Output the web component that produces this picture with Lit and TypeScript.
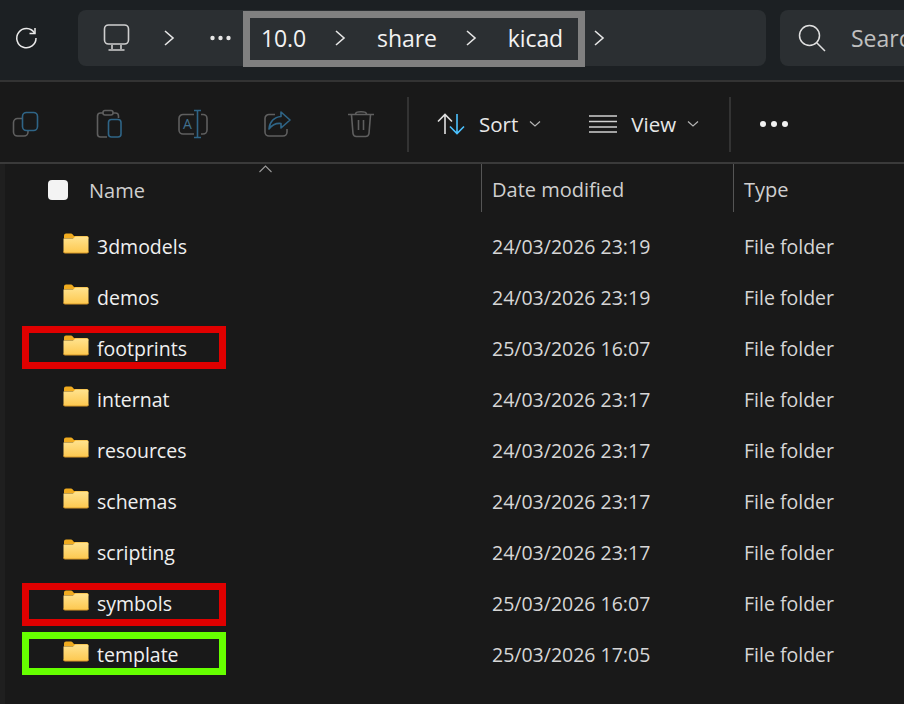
import { LitElement, html, css, svg } from "lit";
import { customElement } from "lit/decorators.js";

const GRAY = "#5f5f5f";
const BLUE = "#2f6587";

const chevron = html`<svg class="chev" width="12" height="18" viewBox="0 0 12 18"><path d="M2 2 L10 9 L2 16" fill="none" stroke="#e6e6e6" stroke-width="1.6"/></svg>`;
const smallChev = html`<svg class="schev" width="12" height="8" viewBox="0 0 12 8"><path d="M1 1.5 L6 6 L11 1.5" fill="none" stroke="#b5b5b5" stroke-width="1.2"/></svg>`;

const folder = html`<svg class="folder" width="26" height="21" viewBox="0 0 26 21">
  <defs><linearGradient id="fg" x1="0" y1="0" x2="0" y2="1"><stop offset="0" stop-color="#ffe38f"/><stop offset="1" stop-color="#fdc84f"/></linearGradient></defs>
  <path d="M1 2.5 a2 2 0 0 1 2-2 H8 a2 2 0 0 1 1.5 .7 L11 3 H24 a1.5 1.5 0 0 1 1.5 1.5 V5.5 H1 Z" fill="#f0ab1f"/>
  <path d="M.5 5.5 L10 5.5 L12.5 3.5 H24 a1.5 1.5 0 0 1 1.5 1.5 V18.5 a1.5 1.5 0 0 1 -1.5 1.5 H2 a1.5 1.5 0 0 1 -1.5 -1.5 Z" fill="url(#fg)"/>
  <path d="M.5 18.5 a1.5 1.5 0 0 0 1.5 1.5 H24 a1.5 1.5 0 0 0 1.5 -1.5" fill="none" stroke="#d99a2b" stroke-width="1"/>
</svg>`;

const tool = (body: unknown) => html`<svg class="tool" width="32" height="32" viewBox="0 0 32 32" fill="none" stroke-width="1.6">${body}</svg>`;

const toolIcons = [
  tool(svg`<path d="M13 10.5 H9 a4 4 0 0 0 -4.5 4 V24 a4 4 0 0 0 4 4 H15 a4 4 0 0 0 4 -4 V23" stroke=${GRAY}/><rect x="13.5" y="4.5" width="15" height="18" rx="4" stroke=${BLUE}/>`),
  tool(svg`<path d="M10 5 H7.5 a3 3 0 0 0 -3 3 V26 a3 3 0 0 0 3 3 H14 M20 5 h2.5 a3 3 0 0 1 3 3 V10" stroke=${GRAY}/><rect x="10" y="2.5" width="10" height="4.5" rx="2" stroke=${GRAY}/><rect x="15.5" y="11.5" width="12.5" height="17.5" rx="3" stroke=${BLUE}/>`),
  tool(svg`<path d="M17 6.5 H6 a4 4 0 0 0 -4 4 V22 a4 4 0 0 0 4 4 H17 M24 6.5 h2 a4 4 0 0 1 4 4 V22 a4 4 0 0 1 -4 4 h-2" stroke=${GRAY}/><path d="M20.5 2.5 V29.5 M17 2.5 H24 M17 29.5 H24" stroke=${BLUE}/><text x="6" y="21" font-size="14" font-family="Open Sans, sans-serif" fill="#41708d" stroke="none">A</text>`),
  tool(svg`<path d="M14 6.5 H8 a4 4 0 0 0 -4 4 V24 a4 4 0 0 0 4 4 H22 a4 4 0 0 0 4 -4 V21" stroke=${GRAY}/><path d="M20 4 L29 12 L20 20 V15.5 C15 15 11 17 8 21 C8.5 14 13 9 20 8.5 Z" stroke=${BLUE} stroke-linejoin="round"/>`),
  tool(svg`<path d="M3 6.5 H29 M10.5 6 C10.5 3 21.5 3 21.5 6 M6.5 7 L8 25.5 a3.5 3.5 0 0 0 3.5 3 H20.5 a3.5 3.5 0 0 0 3.5 -3 L25.5 7 M13.5 12 V22 M18.5 12 V22" stroke=${GRAY}/>`),
];

const rows: [string, string, string?][] = [
  ["3dmodels", "24/03/2026 23:19"],
  ["demos", "24/03/2026 23:19"],
  ["footprints", "25/03/2026 16:07", "red"],
  ["internat", "24/03/2026 23:17"],
  ["resources", "24/03/2026 23:17"],
  ["schemas", "24/03/2026 23:17"],
  ["scripting", "24/03/2026 23:17"],
  ["symbols", "25/03/2026 16:07", "red low"],
  ["template", "25/03/2026 17:05", "green"],
];

@customElement("app-root")
export class AppRoot extends LitElement {
  static styles = css`
    :host { display: block; width: 904px; height: 704px; overflow: hidden; background: #191919; color: #e8e8e8; font-family: "Open Sans", "Noto Sans", sans-serif; font-size: 19.5px; }
    .top { height: 80px; background: #1c2023; display: flex; align-items: flex-start; padding-top: 10px; box-sizing: border-box; }
    .refresh { margin: 16px 0 0 14px; width: 24px; height: 24px; flex: none; }
    .crumbs { position: relative; margin-left: 40px; width: 688px; height: 56px; background: #2b2f32; border-radius: 8px; display: flex; align-items: center; flex: none; font-size: 23px; letter-spacing: -0.1px; }
    .crumbs > span { display: flex; align-items: center; line-height: 54px; height: 54px; }
    .monitor { margin-left: 25px; flex: none; }
    .c1 { margin-left: 32px; }
    .dots3 { margin-left: 35px; flex: none; }
    .path { margin-left: 30px; white-space: nowrap; color: #f2f2f2; }
    .c2 { margin-left: 28px; }
    .c3 { margin-left: 28px; }
    .c4 { margin-left: 30px; }
    .share { margin-left: 31px; color: #f2f2f2; }
    .kicad { margin-left: 31px; color: #f2f2f2; }
    .hl { position: absolute; left: 165px; top: 1px; width: 342px; height: 56px; box-sizing: border-box; border: 7px solid #808080; }
    .search { margin-left: 14px; flex: 1; height: 56px; background: #2b2f32; border-radius: 8px 0 0 8px; display: flex; align-items: center; overflow: hidden; font-size: 23px; }
    .search svg { margin-left: 18px; flex: none; }
    .search span { margin-left: 25px; color: #c0c0c0; line-height: 54px; height: 54px; }
    .toolbar { height: 84px; box-sizing: border-box; border-top: 2px solid #333; border-bottom: 2px solid #3a3a3a; background: #191919; display: flex; align-items: center; padding-left: 9px; padding-top: 4px; font-size: 20.5px; }
    .tool { flex: none; margin-right: 52px; }
    .tool:nth-child(5) { margin-right: 30px; }
    .vsep { width: 2px; height: 55px; background: #333; flex: none; }
    .sorticon { margin-left: 28px; flex: none; }
    .tlabel { color: #e8e8e8; margin-left: 14px; }
    .schev { margin-left: 11px; flex: none; }
    .viewicon { margin-left: 48px; flex: none; }
    .sep2 { margin-left: 30px; }
    .more { margin-left: 28px; flex: none; }
    .main { position: relative; height: 540px; }
    .head, .row { display: grid; grid-template-columns: 481px 252px 1fr; align-items: center; }
    .head { height: 51px; box-sizing: border-box; padding-top: 2px; color: #cfcfcf; font-size: 20px; }
    .head .name { position: relative; padding-left: 48px; padding-bottom: 1px; box-sizing: border-box; display: flex; align-items: center; height: 100%; }
    .check { width: 20px; height: 20px; background: #f3f3f3; border-radius: 4px; margin-right: 21px; flex: none; }
    .caret { position: absolute; left: 259px; top: -1px; }
    .col { border-left: 1px solid #555; height: 48px; box-sizing: border-box; display: flex; align-items: center; padding-left: 10px; padding-top: 3px; margin-top: -2px; align-self: start; }
    .list { padding-top: 6px; }
    .row { height: 51px; position: relative; color: #d6d6d6; }
    .row .name { display: flex; align-items: center; padding-left: 63px; color: #f0f0f0; }
    .folder { margin-right: 8px; margin-top: -7px; flex: none; }
    .row .date { padding-left: 11px; }
    .row .type { padding-left: 11px; }
    .mark { position: absolute; left: 22px; top: 3px; width: 204px; height: 43px; box-sizing: border-box; border: 7px solid; }
    .mark.red { border-color: #e00000; }
    .mark.green { border-color: #66ff00; }
    .mark.low { top: 5px; }
    .strip { position: absolute; left: 0; top: 0; bottom: 0; width: 5px; background: #1f1f1f; }
  `;

  render() {
    return html`
      <div class="top">
        <svg class="refresh" viewBox="0 0 24 24" fill="none" stroke="#eaeaea" stroke-width="1.5"><path d="M20.5 7 A9.6 9.6 0 1 0 22 12"/><path d="M21 2 V7.5 H15.5"/></svg>
        <div class="crumbs">
          <svg class="monitor" width="28" height="28" viewBox="0 0 28 28" fill="none" stroke="#cfcfcf" stroke-width="1.6"><rect x="1.5" y="1" width="24" height="19" rx="4"/><path d="M9 21 V25 M18 21 V25 M5.5 26 H21.5" /></svg>
          <span class="c1">${chevron}</span>
          <svg class="dots3" width="21" height="6" viewBox="0 0 21 6" fill="#e6e6e6"><circle cx="2.5" cy="3" r="2.2"/><circle cx="10.5" cy="3" r="2.2"/><circle cx="18.5" cy="3" r="2.2"/></svg>
          <span class="path">10.0</span>
          <span class="c2">${chevron}</span>
          <span class="share">share</span>
          <span class="c3">${chevron}</span>
          <span class="kicad">kicad</span>
          <span class="c4">${chevron}</span>
          <div class="hl"></div>
        </div>
        <div class="search">
          <svg width="28" height="28" viewBox="0 0 28 28" fill="none" stroke="#e0e0e0" stroke-width="1.5"><circle cx="11.5" cy="11.5" r="10"/><path d="M18.5 18.5 L27 27"/></svg>
          <span>Search</span>
        </div>
      </div>
      <div class="toolbar">
        ${toolIcons}
        <div class="vsep"></div>
        <svg class="sorticon" width="28" height="22" viewBox="0 0 28 22" fill="none" stroke-width="1.6">
          <path d="M8 21 V1.5 M1 8.5 L8 1.5 L15 8.5" stroke="#e0e0e0"/>
          <path d="M20 1 V20.5 M13 13.5 L20 20.5 L27 13.5" stroke="#4cc2ff"/>
        </svg>
        <span class="tlabel">Sort</span>${smallChev}
        <svg class="viewicon" width="28" height="18" viewBox="0 0 28 18" fill="none" stroke="#d0d0d0" stroke-width="1.5"><path d="M0 1 H28 M0 6.5 H28 M0 12 H28 M0 17 H28"/></svg>
        <span class="tlabel">View</span>${smallChev}
        <div class="vsep sep2"></div>
        <svg class="more" width="30" height="6" viewBox="0 0 30 6" fill="#f0f0f0"><circle cx="4" cy="3" r="3"/><circle cx="15" cy="3" r="3"/><circle cx="26" cy="3" r="3"/></svg>
      </div>
      <div class="main">
        <div class="strip"></div>
        <div class="head">
          <div class="name">
            <div class="check"></div>Name
            <svg class="caret" width="13" height="8" viewBox="0 0 13 8" fill="none" stroke="#9a9a9a" stroke-width="1.1"><path d="M.5 7 L6.5 1 L12.5 7"/></svg>
          </div>
          <div class="col">Date modified</div>
          <div class="col">Type</div>
        </div>
        <div class="list">
          ${rows.map(([n, d, m]) => html`
            <div class="row">
              <div class="name">${folder}<span>${n}</span></div>
              <div class="date">${d}</div>
              <div class="type">File folder</div>
              ${m ? html`<div class="mark ${m}"></div>` : ""}
            </div>`)}
        </div>
      </div>
    `;
  }
}
